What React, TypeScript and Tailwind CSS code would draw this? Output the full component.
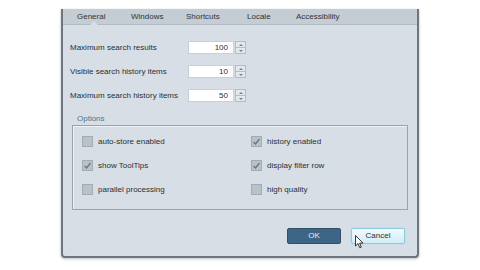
import React from 'react';

const font = { fontFamily: '"Liberation Sans", Arial, sans-serif' };

const tabs = [
    { label: 'General', w: 'w-[54px]' },
    { label: 'Windows', w: 'w-[55px]' },
    { label: 'Shortcuts', w: 'w-[61px]' },
    { label: 'Locale', w: 'w-[49px]' },
    { label: 'Accessibility', w: 'w-[60px]' },
];

const numberRows = [
    { label: 'Maximum search results', value: '100' },
    { label: 'Visible search history items', value: '10' },
    { label: 'Maximum search history items', value: '50' },
];

const options = [
    { label: 'auto-store enabled', checked: false },
    { label: 'history enabled', checked: true },
    { label: 'show ToolTips', checked: true },
    { label: 'display filter row', checked: true },
    { label: 'parallel processing', checked: false },
    { label: 'high quality', checked: false },
];

const Spinner: React.FC<{ value: string }> = ({ value }) => (
    <div className="flex h-[13px] items-stretch">
        <div className="w-[46px] bg-white border border-[#c9d0d7] flex items-center justify-end pr-[5px] text-[8px] text-[#2b2f33]">
            {value}
        </div>
        <div className="w-[11px] ml-[1px] flex flex-col border border-[#b5bdc5] bg-[#e3e8ec]">
            <div className="flex-1 flex items-center justify-center border-b border-[#b5bdc5]">
                <div className="w-0 h-0 border-l-[2px] border-r-[2px] border-b-[2px] border-l-transparent border-r-transparent border-b-[#7a848e]" />
            </div>
            <div className="flex-1 flex items-center justify-center">
                <div className="w-0 h-0 border-l-[2px] border-r-[2px] border-t-[2px] border-l-transparent border-r-transparent border-t-[#7a848e]" />
            </div>
        </div>
    </div>
);

const Check: React.FC<{ checked: boolean }> = ({ checked }) => (
    <div className="w-[11px] h-[11px] bg-[#b9c1c9] border border-[#a3acb5] flex items-center justify-center">
        {checked && (
            <svg width="9" height="9" viewBox="0 0 9 9">
                <path d="M1.5 5 L3.5 7 L7.5 2" stroke="#6c7680" strokeWidth="1.4" fill="none" />
            </svg>
        )}
    </div>
);

export default function App() {
    return (
        <div className="w-[480px] h-[270px] bg-white overflow-hidden pl-[61px] pt-[9px] relative" style={font}>
            <div className="w-[358px] h-[249px] bg-[#d7dee5] border-x-2 border-b-2 border-[#6d757e] rounded-b-[4px] flex flex-col shadow-[0_1px_3px_rgba(0,0,0,0.25)]">
                {/* Tab strip */}
                <div className="relative h-[16px] bg-[#c4ccd4] border-b border-[#b3bcc5] flex items-center pl-[14px] text-[8px] text-[#2f3439]">
                    {tabs.map((t) => (
                        <span key={t.label} className={t.w}>{t.label}</span>
                    ))}
                    <div className="absolute left-[27px] bottom-[-1px] w-0 h-0 border-l-[4px] border-r-[4px] border-b-[4px] border-l-transparent border-r-transparent border-b-[#d7dee5]" />
                </div>

                {/* Number fields */}
                <div className="flex flex-col gap-[11px] pl-[7px] pt-[16px]">
                    {numberRows.map((r) => (
                        <div key={r.label} className="flex items-center">
                            <span className="w-[118px] text-[8px] text-[#2b2f33]">{r.label}</span>
                            <Spinner value={r.value} />
                        </div>
                    ))}
                </div>

                {/* Options group */}
                <div className="mx-[9px] mt-[12px]">
                    <div className="pl-[5px] text-[8px] text-[#4f7394] h-[10px] leading-[10px]">Options</div>
                    <div className="mt-[1px] h-[85px] border border-[#99a4af] shadow-[inset_1px_1px_0_#eef2f5] grid grid-cols-[169px_1fr] content-start pt-[10px] gap-y-[13px] pl-[9px]">
                        {options.map((o) => (
                            <div key={o.label} className="flex items-center gap-[5px] h-[11px] text-[8px] text-[#2b2f33]">
                                <Check checked={o.checked} />
                                <span>{o.label}</span>
                            </div>
                        ))}
                    </div>
                </div>

                {/* Buttons */}
                <div className="flex-1 flex items-end justify-end gap-[10px] pr-[12px] pb-[12px]">
                    <button className="w-[54px] h-[16px] rounded-[2px] bg-[#3e6585] border border-[#2e4f69] text-[8px] text-[#e8eef3]">
                        OK
                    </button>
                    <button className="w-[54px] h-[16px] rounded-[2px] bg-gradient-to-b from-[#f2fafd] to-[#d2ecf4] border border-[#8ccbe0] shadow-[0_0_2px_#9fdcee] text-[8px] text-[#2b2f33]">
                        Cancel
                    </button>
                </div>
            </div>

            {/* Mouse cursor */}
            <svg className="absolute left-[355px] top-[235px]" width="9" height="14" viewBox="0 0 9 14">
                <path d="M0.5 0.5 L0.5 11 L3 8.6 L4.8 12.8 L6.3 12.1 L4.6 8.1 L8 8.1 Z" fill="#fff" stroke="#222" strokeWidth="0.9" />
            </svg>
        </div>
    );
}
